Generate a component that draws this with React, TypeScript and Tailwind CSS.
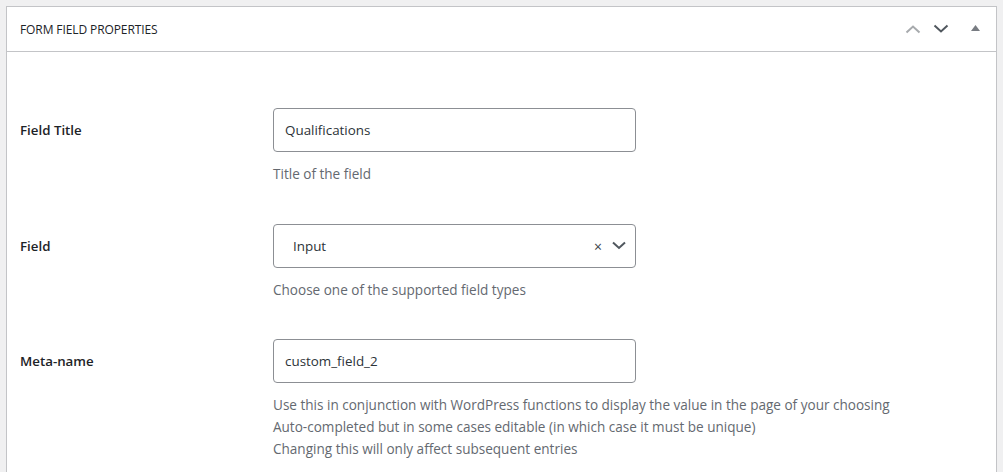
import React from 'react';

const font = { fontFamily: '"Open Sans", "Noto Sans", sans-serif' };

const Chevron: React.FC<{ up?: boolean; className?: string }> = ({ up, className }) => (
  <svg width="16" height="10" viewBox="0 0 16 10" fill="none" stroke="currentColor" strokeWidth="2" className={className}>
    {up ? <polyline points="1.5,8.5 8,2.5 14.5,8.5" /> : <polyline points="1.5,1.5 8,7.5 14.5,1.5" />}
  </svg>
);

const Row: React.FC<{ label: string; children: React.ReactNode; help: string[] }> = ({ label, children, help }) => (
  <div className="flex">
    <div className="w-[253px] shrink-0 h-[44px] pt-[2px] flex items-center text-[13.3px] font-semibold text-[#1d2327]">{label}</div>
    <div>
      {children}
      <div className="mt-[11px] text-[13.55px] leading-[22px] text-[#646970]">
        {help.map((h, i) => <div key={i}>{h}</div>)}
      </div>
    </div>
  </div>
);

export default function App() {
  return (
    <div className="w-[1003px] h-[472px] bg-[#f0f0f1] pt-[6px] px-[6px] overflow-hidden" style={font}>
      <div className="bg-white border border-[#c3c4c7] h-[600px]">
        <div className="h-[45px] border-b border-[#c3c4c7] flex items-center justify-between pl-[13px] pr-[16px]">
          <h2 className="text-[12px] text-[#1d2327] tracking-[-0.1px] pt-[1px]">FORM FIELD PROPERTIES</h2>
          <div className="flex items-center">
            <Chevron up className="text-[#a7aaad]" />
            <Chevron className="text-[#50575e] ml-[12px]" />
            <svg width="9" height="6" viewBox="0 0 9 6" className="ml-[22px] mb-[3px] text-[#787c82]" fill="currentColor">
              <polygon points="4.5,0 9,6 0,6" />
            </svg>
          </div>
        </div>
        <div className="pt-[56px] pl-[13px] flex flex-col gap-[38.5px]">
          <Row label="Field Title" help={['Title of the field']}>
            <div className="w-[363px] h-[44px] border border-[#8c8f94] rounded-[4px] flex items-center px-[11px] pt-[1px] text-[13.4px] text-[#2c3338]">Qualifications</div>
          </Row>
          <Row label="Field" help={['Choose one of the supported field types']}>
            <div className="w-[363px] h-[44px] border border-[#8c8f94] rounded-[4px] flex items-center pl-[19px] pr-[8px] pt-[2px] text-[13.4px] text-[#2c3338]">
              <span className="flex-1">Input</span>
              <span className="text-[14px] text-[#3c434a] mr-[10px] leading-none">×</span>
              <svg width="14" height="9" viewBox="0 0 14 9" fill="none" stroke="#50575e" strokeWidth="2" className="mr-[1px] mb-[2px]">
                <polyline points="1,1.5 7,7 13,1.5" />
              </svg>
            </div>
          </Row>
          <Row
            label="Meta-name"
            help={[
              'Use this in conjunction with WordPress functions to display the value in the page of your choosing',
              'Auto-completed but in some cases editable (in which case it must be unique)',
              'Changing this will only affect subsequent entries',
            ]}
          >
            <div className="w-[363px] h-[44px] border border-[#8c8f94] rounded-[4px] flex items-center px-[11px] pt-[1px] text-[13.4px] text-[#2c3338]">custom_field_2</div>
          </Row>
        </div>
      </div>
    </div>
  );
}
